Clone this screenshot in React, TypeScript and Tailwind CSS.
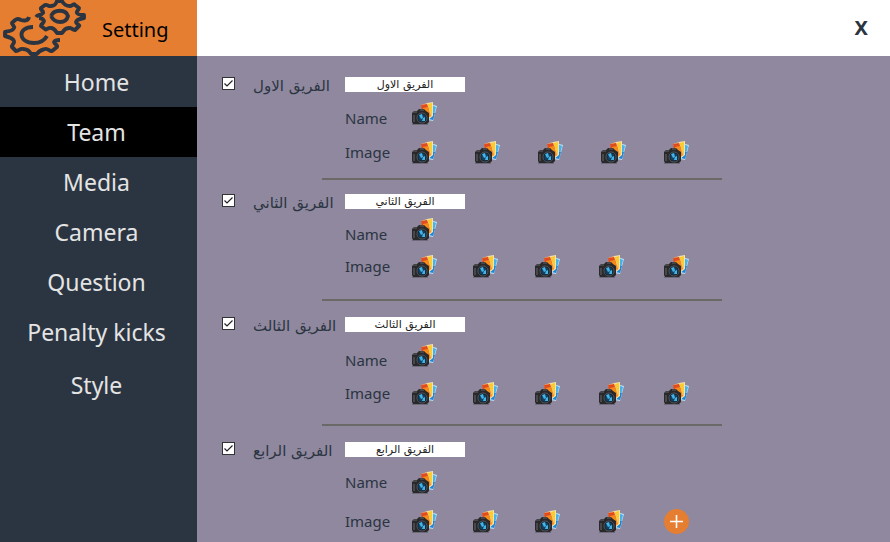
import type { ReactNode } from "react";

const menu = ["Home", "Team", "Media", "Camera", "Question", "Penalty kicks"];

const tightColumns = "grid-cols-[61px_62px_64px_65px_26px]";
const evenColumns = "grid-cols-[63px_63px_63px_63px_26px]";

const teams = [
  { id: "first", name: "الفريق الاول", section: "h-[103px]", nameRow: "mt-[9px] h-[29px]", nameLabel: "self-end", imageRow: "mt-[10px]", columns: evenColumns, add: false },
  { id: "second", name: "الفريق الثاني", section: "mt-[14px] h-[107px]", nameRow: "mt-[8px] h-[29px]", nameLabel: "self-end", imageRow: "mt-[8px]", columns: tightColumns, add: false },
  { id: "third", name: "الفريق الثالث", section: "mt-[16px] h-[109px]", nameRow: "mt-[11px] h-[29px]", nameLabel: "self-end", imageRow: "mt-[9px]", columns: tightColumns, add: false },
  { id: "fourth", name: "الفريق الرابع", section: "mt-[16px]", nameRow: "mt-[13px] h-[25px]", nameLabel: "self-start", imageRow: "mt-[14px]", columns: tightColumns, add: true },
];

function Gears() {
  return (
    <svg viewBox="0 0 90 56" className="h-[56px] w-[90px] shrink-0" fill="none" stroke="#2b3541" strokeWidth="3.9" strokeLinejoin="round" strokeLinecap="butt" aria-hidden="true">
      <path d="M29 17 C28 21 24 21 21 20 C17 18 16 19 12 23 C12 25 15 26 14 28 C13 31 9 31 5 32 V36 C9 37 13 38 14 41 C15 44 11 45 12 47 L16 51 C19 51 20 48 23 49 C27 49 29 50 31 54 H37 C39 50 42 50 45 49 C48 48 50 52 52 51 L57 47 C58 45 54 44 54 42 C55 40 57 40 60 40" />
      <path d="M33 27 C17 27 18 43 34 43 Q43 43 47 36" />
      <path d="M36 17 C38 14 41 16 43 13 C44 11 40 10 41 8 L45 5 C47 4 49 7 51 6 C55 6 56 4 57 1 H62 C64 5 67 6 70 6 C72 6 74 3 75 5 L79 8 C79 10 76 11 77 13 C78 15 81 15 84 15 V18 C80 19 77 19 76 22 C76 24 80 25 79 26 L75 30 C72 30 71 27 69 28 C65 28 64 30 62 33 H57 C55 30 54 28 51 28 C48 27 46 31 45 29 L41 26 C41 24 44 23 44 21 C43 19 41 18 39 18" />
      <path d="M51 16 C54 9 66 9 68 16 C66 24 55 24 51 16" />
    </svg>
  );
}

function CameraIcon() {
  return (
    <svg viewBox="0 0 26 25" className="h-[25px] w-[26px]" aria-hidden="true">
      <path d="M19 3 L26 5 L22 20 L16 19Z" fill="#b9def2" />
      <path d="M20 4 L25 6 L22 18 L17 18Z" fill="#45b2ee" />
      <path d="M22 12 L24 12 L22 19 L18 18Z" fill="#1b86dc" />
      <path d="M16 2 L22 1 L22 15 L17 19Z" fill="#f5e3a8" />
      <path d="M17 3 L21 2 L21 14 L17 17Z" fill="#fccb32" />
      <path d="M10 4 L16 2 L21 15 L15 19Z" fill="#f3c48a" />
      <path d="M10 4 L16 3 L18 9 L11 10Z" fill="#e04c1d" />
      <path d="M12 7 L17 6 L20 15 L15 18Z" fill="#f58a1b" />
      <path d="M1 23 H17 V24 H1Z" fill="#706b7c" />
      <path d="M1 12 L3 10 L6 10 L8 8 H13 L15 10 L18 12 V21 L16 23 H2 L1 21Z" fill="#29292b" />
      <path d="M2 11 H6 M9 9 H13" stroke="#626264" />
      <path d="M3 14 V21" stroke="#48484a" strokeWidth="2" />
      <circle cx="11" cy="17" r="5" fill="#11161d" stroke="#535a61" />
      <circle cx="11" cy="17" r="3.8" fill="#14415f" />
      <path d="M8 14 L11 13 L12 17 L10 18Z M12 17 L14 16 L14 20 L11 20Z" fill="#42b4ea" />
    </svg>
  );
}

function IconButton({ label, children }: { label: string; children: ReactNode }) {
  return <button type="button" aria-label={label} className="block h-[25px] w-[26px]">{children}</button>;
}

export default function App() {
  return (
    <div className="flex min-h-screen flex-col bg-[#8f889f] font-['Noto_Sans','DejaVu_Sans',sans-serif] text-[#2b3541]">
      <header className="flex h-[56px] bg-white">
        <div className="flex w-[197px] items-center bg-[#e67e31] text-black">
          <Gears />
          <h1 className="pl-[12px] pt-[4px] text-[20px] leading-[28px]">Setting</h1>
        </div>
        <button type="button" aria-label="Close" className="ml-auto mr-[22px] text-[20px] font-bold">X</button>
      </header>
      <div className="flex flex-1">
        <nav className="w-[197px] shrink-0 bg-[#2b3541] pt-px text-[23px] text-[#e4e4e4]">
          {menu.map((item) => (
            <button key={item} type="button" className={`block h-[50px] w-full pr-[4px] ${item === "Team" ? "bg-black" : ""}`}>{item}</button>
          ))}
          <button type="button" className="mt-[3px] block h-[50px] w-full pr-[4px]">Style</button>
        </nav>
        <main className="min-w-0 flex-1 pl-[25px] pt-[21px]">
          {teams.map((team) => (
            <section key={team.id} className={`flex flex-col ${team.section}`}>
              <div className="flex h-[15px]">
                <label className="flex w-[123px] items-start">
                  <span className="relative mr-[18px] block h-[13px] w-[13px]">
                    <input type="checkbox" defaultChecked className="peer block h-[13px] w-[13px] appearance-none border border-[#333333] bg-white" />
                    <svg viewBox="0 0 13 13" className="pointer-events-none absolute inset-0 hidden peer-checked:block" fill="none" stroke="#222222" strokeWidth="1.2" aria-hidden="true"><path d="M2.5 6.5 L5 9 L10.5 3.5" /></svg>
                  </span>
                  <span dir="rtl" className="whitespace-nowrap font-['DejaVu_Sans',sans-serif] text-[15px] leading-[19px]">{team.name}</span>
                </label>
                <input aria-label={`${team.name} name`} dir="rtl" defaultValue={team.name} className="h-[15px] w-[120px] bg-white text-center font-['DejaVu_Sans',sans-serif] text-[11px] leading-[15px] text-[#222222]" />
              </div>
              <div className={`ml-[123px] flex items-start ${team.nameRow}`}>
                <span className={`w-[66px] text-[15px] leading-[24px] ${team.nameLabel}`}>Name</span>
                <IconButton label="Choose name picture"><CameraIcon /></IconButton>
              </div>
              <div className={`ml-[123px] flex ${team.imageRow}`}>
                <span className="w-[66px] text-[15px] leading-[24px]">Image</span>
                <div className={`grid ${team.columns}`}>
                  {[1, 2, 3, 4].map((n) => <IconButton key={n} label={`Choose image ${n}`}><CameraIcon /></IconButton>)}
                  {team.add ? (
                    <IconButton label="Add image">
                      <svg viewBox="0 0 26 25" className="h-[25px] w-[26px]" aria-hidden="true"><circle cx="13.5" cy="12.5" r="12.5" fill="#e67e31" /><path d="M7 12.5 H20 M13.5 6 V19" stroke="white" strokeWidth="1.6" /></svg>
                    </IconButton>
                  ) : (
                    <IconButton label="Choose image 5"><CameraIcon /></IconButton>
                  )}
                </div>
              </div>
              {!team.add && <hr className="ml-[100px] mt-auto w-[400px] border-t-2 border-[#6b6868]" />}
            </section>
          ))}
        </main>
      </div>
    </div>
  );
}
